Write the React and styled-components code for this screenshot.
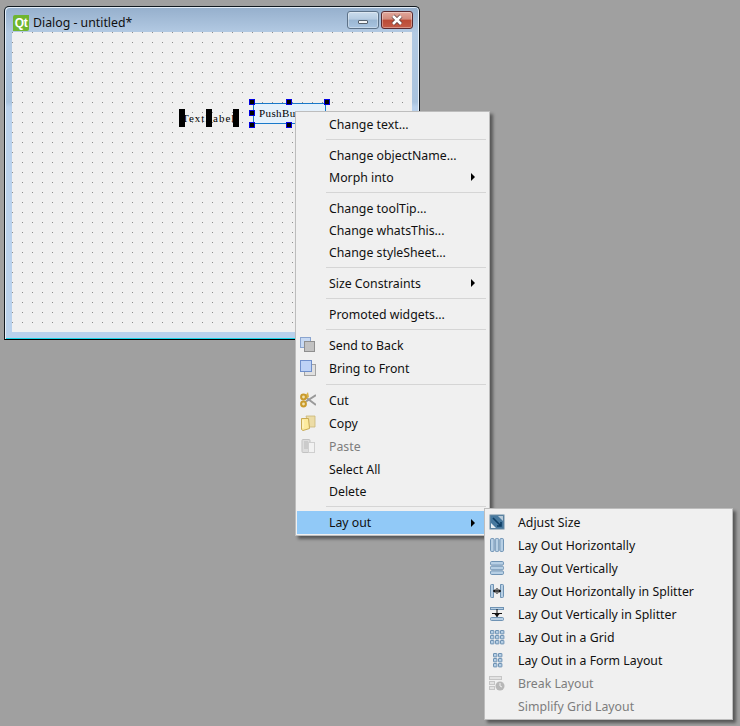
import React from 'react'
import styled, { createGlobalStyle } from 'styled-components'

const GlobalStyle = createGlobalStyle`
  html, body { margin: 0; padding: 0; background: #a0a0a0; }
  body { font-family: "Noto Sans", "Liberation Sans", sans-serif; }
`

const Desktop = styled.div`
  position: relative;
  width: 740px;
  height: 726px;
  padding: 6px 0 0 4px;
  box-sizing: border-box;
  overflow: hidden;
`

const DialogWindow = styled.div`
  width: 416px;
  height: 334px;
  box-sizing: border-box;
  display: flex;
  flex-direction: column;
  padding: 0 7px 7px;
  border: 1px solid #10181f;
  border-bottom-color: #000;
  border-radius: 5px 5px 0 0;
  background: linear-gradient(180deg, #95afcc 0, #b3cae3 26px, #a9c3de 95px, #b9d1ec 100px, #b9d1ec 100%);
  box-shadow: inset 1px 1px 0 #e4eef8, inset -1px 0 0 #e4eef8, inset 0 -1px 0 #19d3e6;
`

const TitleBar = styled.div`
  height: 25px;
  display: flex;
  align-items: flex-end;
  gap: 4px;
  padding-left: 1px;
`

const QtLogo = styled.div`
  width: 16px;
  height: 16px;
  margin-bottom: 1px;
  background: #6fb52f;
  border-radius: 2px 0 2px 0;
  color: #fff;
  font: bold 12px/16px "Liberation Sans", sans-serif;
  text-align: center;
  letter-spacing: -0.5px;
`

const Title = styled.div`
  flex: 1;
  font-size: 12.3px;
  line-height: 18px;
  color: #101010;
  white-space: nowrap;
`

const Controls = styled.div`
  display: flex;
  gap: 2px;
  align-self: flex-start;
  margin-top: 4px;
  margin-right: -1px;
`

const ControlButton = styled.div`
  width: 32px;
  height: 18px;
  box-sizing: border-box;
  display: flex;
  align-items: center;
  justify-content: center;
  border: 1px solid ${p => (p.$close ? '#5a2a30' : '#5d7288')};
  border-radius: 3px;
  background: ${p =>
    p.$close
      ? 'linear-gradient(180deg, #e2a79b 0, #d18b7d 45%, #bb4a35 50%, #c45c48 100%)'
      : 'linear-gradient(180deg, #cbdcec 0, #b5cbe1 45%, #9ab6d2 50%, #a9c4e0 100%)'};
  box-shadow: inset 0 0 0 1px rgba(255, 255, 255, 0.35);
`

const MinGlyph = styled.div`
  width: 10px;
  height: 4px;
  background: #f4f6f8;
  border: 1px solid #55606c;
  border-radius: 1px;
  box-sizing: border-box;
  margin-top: 3px;
`

const FormCanvas = styled.div`
  position: relative;
  flex: 1;
  background-color: #f0f0f0;
  background-image: radial-gradient(circle at 0.5px 0.5px, #8c8c8c 0.5px, transparent 0.51px);
  background-size: 10px 10px;
`

const LabelWidget = styled.div`
  position: absolute;
  left: 170px;
  top: 79px;
  width: 55px;
  font: 11px/14px "Liberation Serif", serif;
  letter-spacing: 1px;
  color: #000;
  white-space: nowrap;
`

const LabelHandle = styled.div`
  position: absolute;
  top: -2px;
  left: ${p => p.$x}px;
  width: 6px;
  height: 18px;
  background: #000;
`

const ButtonWidget = styled.div`
  position: absolute;
  left: 241px;
  top: 71px;
  width: 73px;
  height: 21px;
  box-sizing: border-box;
  border: 1px solid #1979ca;
  background: #e5f1fb;
  font: 11px/19px "Liberation Serif", serif;
  letter-spacing: 0.4px;
  color: #000;
  padding-left: 5px;
  white-space: nowrap;
`

const ButtonHandle = styled.div`
  position: absolute;
  left: ${p => p.$x}px;
  top: ${p => p.$y}px;
  width: 6px;
  height: 6px;
  box-sizing: border-box;
  background: #000;
  border: 1px solid #0000e0;
`

const Popup = styled.div`
  position: absolute;
  left: ${p => p.$left}px;
  top: ${p => p.$top}px;
  width: ${p => p.$width}px;
  box-sizing: border-box;
  padding: ${p => p.$padTop}px 0 1px 1px;
  background: #f0f0f0;
  border: 1px solid #bdbdbd;
  box-shadow: 3px 3px 3px rgba(0, 0, 0, 0.45);
`

const Item = styled.div`
  position: relative;
  height: ${p => (p.$tall ? 23 : 22)}px;
  display: flex;
  align-items: center;
  padding-left: 32px;
  font-size: 12.3px;
  color: ${p => (p.$disabled ? '#7d7d7d' : '#101010')};
  background: ${p => (p.$active ? '#91c9f7' : 'transparent')};
  white-space: nowrap;
`

const IconSlot = styled.span`
  position: absolute;
  left: 3px;
  top: 3px;
  width: 16px;
  height: 16px;
  opacity: ${p => (p.$disabled ? 0.55 : 1)};
  svg { display: block; }
`

const Arrow = styled.span`
  position: absolute;
  right: 14px;
  top: 50%;
  margin-top: -4px;
  border-left: 4px solid #000;
  border-top: 4px solid transparent;
  border-bottom: 4px solid transparent;
`

const Separator = styled.div`
  height: 1px;
  margin: 4px 3px 4px 29px;
  background: #d5d5d5;
`

const Svg = ({ children }) => (
  <svg width="16" height="16" viewBox="0 0 16 16">{children}</svg>
)

const icons = {
  back: (
    <Svg>
      <rect x="0.5" y="0.5" width="10" height="10" fill="#c7d9f3" stroke="#8aa4cf" />
      <rect x="4.5" y="4.5" width="10" height="10" fill="#c2c2c2" stroke="#8f8f8f" />
    </Svg>
  ),
  front: (
    <Svg>
      <rect x="4.5" y="4.5" width="11" height="11" fill="#e0e0e0" stroke="#a2a2a2" />
      <rect x="0.5" y="0.5" width="11" height="11" fill="#bdd2f6" stroke="#6f8fcb" />
    </Svg>
  ),
  cut: (
    <Svg>
      <path d="M16 3 6 9.500M16 13 6 5.500" stroke="#9a9a9a" strokeWidth="2" fill="none" />
      <path d="M8 0 9 5 6 7 5 4Z" fill="#d9b24a" />
      <circle cx="3.500" cy="5" r="2.400" fill="#f0e2b0" stroke="#c99a2c" strokeWidth="2" />
      <circle cx="3.500" cy="12" r="2.400" fill="#f0e2b0" stroke="#c99a2c" strokeWidth="2" />
    </Svg>
  ),
  copy: (
    <Svg>
      <path d="M6 1h9v11H9Z" fill="#ecdca6" stroke="#c9b577" strokeWidth=".8" />
      <path d="M1.500 3.500h7l1 10-6.500 2-1.500-1Z" fill="#fdeb9e" stroke="#c8aa55" />
      <path d="M3 5v8" stroke="#fff8d8" />
    </Svg>
  ),
  paste: (
    <Svg>
      <rect x="2" y="1.500" width="8" height="13" rx="1" fill="#cfcfcf" stroke="#9d9d9d" />
      <path d="M4 4h4M4 6h4M4 8h4M4 10h4" stroke="#8c8c8c" />
      <rect x="8.500" y="4.500" width="6" height="10" fill="#f4f4f4" stroke="#b5b5b5" />
    </Svg>
  ),
  adjust: (
    <Svg>
      <rect x="1" y="1" width="14" height="14" fill="#46789e" stroke="#6d8ba3" />
      <path d="M2 9 7 14H2Z" fill="#e6eef4" />
      <path d="M9 2h5v5Z" fill="#b9cbd9" />
      <path d="M4 4 12 12M12 8v4H8" stroke="#0d3d63" strokeWidth="1.600" fill="none" />
    </Svg>
  ),
  horizontal: (
    <Svg>
      <rect x="1.500" y="1.500" width="3.600" height="13" rx="1.200" fill="#b7cfe4" stroke="#6f93b4" />
      <rect x="6.200" y="1.500" width="3.600" height="13" rx="1.200" fill="#b7cfe4" stroke="#6f93b4" />
      <rect x="10.900" y="1.500" width="3.600" height="13" rx="1.200" fill="#b7cfe4" stroke="#6f93b4" />
    </Svg>
  ),
  vertical: (
    <Svg>
      <rect x="1.500" y="1.500" width="13" height="3.600" rx="1.200" fill="#b7cfe4" stroke="#6f93b4" />
      <rect x="1.500" y="6.200" width="13" height="3.600" rx="1.200" fill="#b7cfe4" stroke="#6f93b4" />
      <rect x="1.500" y="10.900" width="13" height="3.600" rx="1.200" fill="#b7cfe4" stroke="#6f93b4" />
    </Svg>
  ),
  hsplit: (
    <Svg>
      <path d="M2.500 1.500h2v13h-2a1 1 0 0 1-1-1v-11a1 1 0 0 1 1-1ZM11.500 1.500h2a1 1 0 0 1 1 1v11a1 1 0 0 1-1 1h-2Z" fill="#b7cfe4" stroke="#6f93b4" />
      <path d="M4 8h8M8 5v6" stroke="#111" />
      <path d="M4 8l2.500-2.200v4.400ZM12 8l-2.500-2.200v4.400Z" fill="#111" />
    </Svg>
  ),
  vsplit: (
    <Svg>
      <rect x="1.500" y="1.500" width="13" height="2" fill="#b7cfe4" stroke="#6f93b4" />
      <rect x="1.500" y="11.500" width="13" height="3" rx="1" fill="#b7cfe4" stroke="#6f93b4" />
      <path d="M3 7.500h10M8 3v8" stroke="#111" />
      <path d="M8 11 5.500 8h5Z" fill="#111" />
    </Svg>
  ),
  grid: (
    <Svg>
      {[1, 6, 11].flatMap(y =>
        [1, 6, 11].map(x => (
          <rect key={`${x}-${y}`} x={x + 0.5} y={y + 0.5} width="3.400" height="3.400" rx="0.300" fill="#b7cfe4" stroke="#6f93b4" />
        ))
      )}
    </Svg>
  ),
  form: (
    <Svg>
      {[1, 6, 11].flatMap(y =>
        [4, 9].map(x => (
          <rect key={`${x}-${y}`} x={x + 0.5} y={y + 0.5} width="3.400" height="3.400" rx="0.300" fill="#b7cfe4" stroke="#6f93b4" />
        ))
      )}
    </Svg>
  ),
  breakLayout: (
    <Svg>
      <rect x="0.500" y="1.500" width="12" height="3" fill="#d8d8d8" stroke="#a5a5a5" />
      <rect x="0.500" y="6.500" width="5" height="3" fill="#d8d8d8" stroke="#a5a5a5" />
      <rect x="0.500" y="11.500" width="5" height="3" fill="#d8d8d8" stroke="#a5a5a5" />
      <circle cx="11" cy="11" r="4.500" fill="#8a8a8a" />
      <path d="M11 8v3l2 1" stroke="#eee" fill="none" />
    </Svg>
  ),
}

const mainItems = [
  { label: 'Change text...' },
  { sep: true },
  { label: 'Change objectName...' },
  { label: 'Morph into', arrow: true },
  { sep: true },
  { label: 'Change toolTip...' },
  { label: 'Change whatsThis...' },
  { label: 'Change styleSheet...' },
  { sep: true },
  { label: 'Size Constraints', arrow: true },
  { sep: true },
  { label: 'Promoted widgets...' },
  { sep: true },
  { label: 'Send to Back', icon: 'back', tall: true },
  { label: 'Bring to Front', icon: 'front', tall: true },
  { sep: true },
  { label: 'Cut', icon: 'cut', tall: true },
  { label: 'Copy', icon: 'copy', tall: true },
  { label: 'Paste', icon: 'paste', tall: true, disabled: true },
  { label: 'Select All' },
  { label: 'Delete' },
  { sep: true },
  { label: 'Lay out', arrow: true, tall: true, active: true },
]

const layoutItems = [
  { label: 'Adjust Size', icon: 'adjust' },
  { label: 'Lay Out Horizontally', icon: 'horizontal' },
  { label: 'Lay Out Vertically', icon: 'vertical' },
  { label: 'Lay Out Horizontally in Splitter', icon: 'hsplit' },
  { label: 'Lay Out Vertically in Splitter', icon: 'vsplit' },
  { label: 'Lay Out in a Grid', icon: 'grid' },
  { label: 'Lay Out in a Form Layout', icon: 'form' },
  { label: 'Break Layout', icon: 'breakLayout', disabled: true },
  { label: 'Simplify Grid Layout', disabled: true },
].map(item => ({ ...item, tall: true }))

function MenuList({ items }) {
  return items.map((item, i) =>
    item.sep ? (
      <Separator key={i} />
    ) : (
      <Item key={i} $tall={item.tall} $disabled={item.disabled} $active={item.active}>
        {item.icon && <IconSlot $disabled={item.disabled}>{icons[item.icon]}</IconSlot>}
        {item.label}
        {item.arrow && <Arrow />}
      </Item>
    )
  )
}

const buttonHandles = [
  [-5, -5], [32, -5], [70, -5],
  [-5, 6],
  [-5, 18], [32, 18], [70, 18],
]

export default function App() {
  return (
    <Desktop>
      <GlobalStyle />
      <DialogWindow>
        <TitleBar>
          <QtLogo>Qt</QtLogo>
          <Title>Dialog - untitled*</Title>
          <Controls>
            <ControlButton><MinGlyph /></ControlButton>
            <ControlButton $close>
              <svg width="14" height="12" viewBox="0 0 14 12">
                <path d="M3 2 11 10M11 2 3 10" stroke="#5a3a3a" strokeWidth="4" />
                <path d="M3 2 11 10M11 2 3 10" stroke="#fff" strokeWidth="2.600" />
              </svg>
            </ControlButton>
          </Controls>
        </TitleBar>
        <FormCanvas>
          <LabelWidget>
            TextLabel
            <LabelHandle $x={-3} />
            <LabelHandle $x={24} />
            <LabelHandle $x={51} />
          </LabelWidget>
          <ButtonWidget>
            PushButton
            {buttonHandles.map(([x, y]) => (
              <ButtonHandle key={`${x}-${y}`} $x={x} $y={y} />
            ))}
          </ButtonWidget>
        </FormCanvas>
      </DialogWindow>
      <Popup $left={295} $top={111} $width={195} $padTop={1}>
        <MenuList items={mainItems} />
      </Popup>
      <Popup $left={484} $top={508} $width={249} $padTop={2}>
        <MenuList items={layoutItems} />
      </Popup>
    </Desktop>
  )
}
